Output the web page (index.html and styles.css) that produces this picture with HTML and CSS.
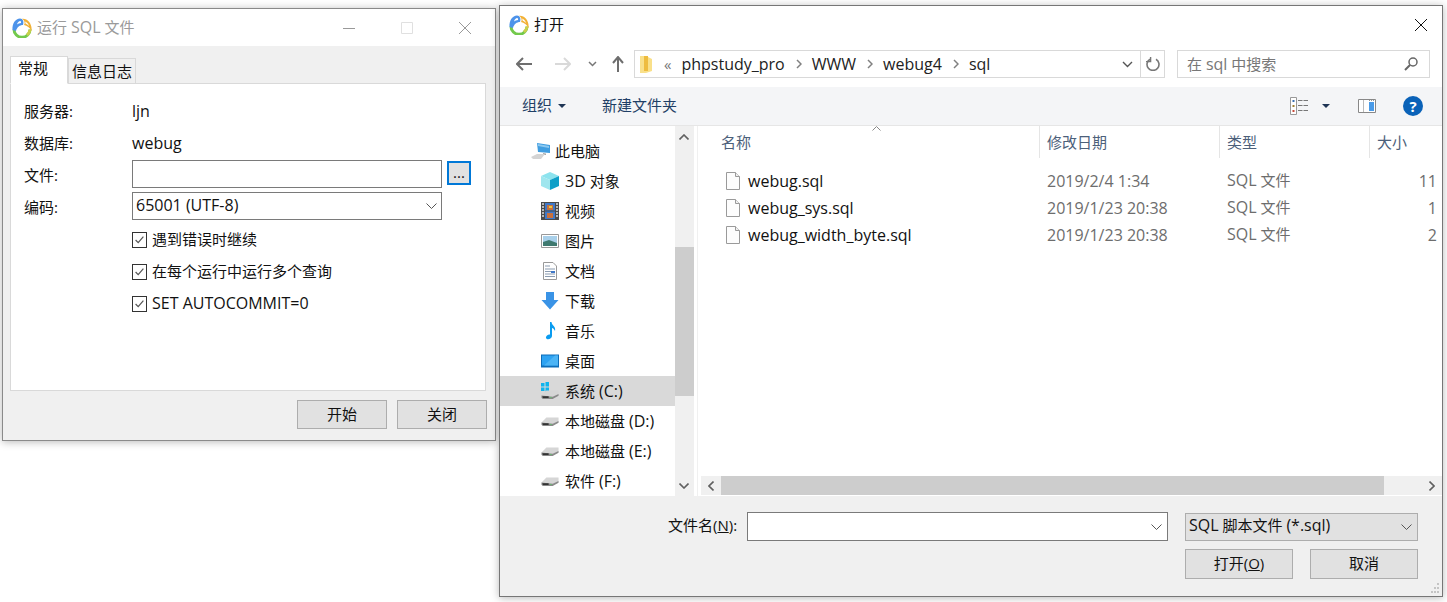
FILE: index.html
```html
<!DOCTYPE html>
<html lang="zh-CN">
<head>
<meta charset="utf-8">
<title>运行 SQL 文件</title>
<link rel="stylesheet" href="styles.css">
</head>
<body>
<svg class="defs" width="0" height="0">
  <defs>
    <symbol id="logo" viewBox="0 0 20 20">
      <path d="M2 11.500A8 7.800 0 0 0 18 11.500" fill="none" stroke="#73c94c" stroke-width="3"/>
      <path d="M15 17A8 7.800 0 0 0 18 11.500" fill="none" stroke="#c9cf4a" stroke-width="3"/>
      <path d="M.5 12C0 5.500 3.500 .5 8 .5C11 .5 12 3.500 11 7C8 7 5 9 4 13Z" fill="#4d93ea"/>
      <path d="M5 6.500C5.500 4.500 7 3 8.200 3C9 3 9.300 4 9 5C7.500 5.200 6 5.700 5 6.500Z" fill="#fff"/>
      <path d="M10 .8C15.500 0 20.500 6 19.500 13C18 9.500 15 7.500 12 7C13.500 4.500 12 2 10 .8Z" fill="#f2b136"/>
      <path d="M13 3.500C15 4 16.500 6 17 8C15.800 6.800 14.600 6 13.500 5.600C13.600 4.900 13.400 4.200 13 3.500Z" fill="#fff"/>
    </symbol>
    <symbol id="file" viewBox="0 0 14 18">
      <path d="M.5.5H9.500L13.500 4.500V17.500H.5Z" fill="#fdfdfd" stroke="#9a9a9a"/>
      <path d="M9.500.5V4.500H13.500" fill="#f0f0f0" stroke="#9a9a9a"/>
    </symbol>
    <symbol id="drive" viewBox="0 0 20 12">
      <path d="M.5 7L6 1.500H19.500V6L13 9H3Z" fill="#d6d6d6"/>
      <path d="M.5 7L13 8.500L19.500 5.500V7.500L13 11H2L.5 9.500Z" fill="#8a8a8a"/>
      <path d="M1.500 8H8.500V10H2Z" fill="#333"/>
      <path d="M10 9H12V10H10Z" fill="#5fc46a"/>
    </symbol>
    <symbol id="chev" viewBox="0 0 11 6">
      <path d="M.5.5L5.500 5.500L10.500.5" fill="none" stroke="currentColor"/>
    </symbol>
    <symbol id="check" viewBox="0 0 15 15">
      <path d="M3 7.500L6 10.500L12 3.500" fill="none" stroke="#555" stroke-width="1.400"/>
    </symbol>
    <symbol id="sep" viewBox="0 0 6 10">
      <path d="M1 1L5 5L1 9" fill="none" stroke="#808080" stroke-width="1.500"/>
    </symbol>
  </defs>
</svg>

<section class="win win-run">
  <header class="run-title">
    <svg class="logo"><use href="#logo"/></svg>
    <span class="run-title-text">运行 <span class="l">SQL</span> 文件</span>
    <div class="caption">
      <svg class="cap-icon" viewBox="0 0 12 12"><path d="M0 6.500H12" stroke="#999" fill="none"/></svg>
      <svg class="cap-icon" viewBox="0 0 12 12"><path d="M.5.5H11.500V11.500H.5Z" stroke="#e0e0e0" fill="none"/></svg>
      <svg class="cap-icon" viewBox="0 0 12 12"><path d="M0 0L12 12M12 0L0 12" stroke="#999" fill="none"/></svg>
    </div>
  </header>
  <div class="run-body">
    <div class="tabs">
      <div class="tab tab-active">常规</div>
      <div class="tab">信息日志</div>
    </div>
    <div class="panel">
      <div class="form">
        <span class="form-label">服务器:</span><span class="form-value l">ljn</span>
        <span class="form-label">数据库:</span><span class="form-value l">webug</span>
        <span class="form-label">文件:</span>
        <div class="file-row"><div class="input"></div><div class="dots">...</div></div>
        <span class="form-label">编码:</span>
        <div class="input select"><span class="form-value l">65001 (UTF-8)</span><svg class="chev"><use href="#chev"/></svg></div>
        <label class="check-row"><span class="box"><svg class="check"><use href="#check"/></svg></span><span class="check-text">遇到错误时继续</span></label>
        <label class="check-row"><span class="box"><svg class="check"><use href="#check"/></svg></span><span class="check-text">在每个运行中运行多个查询</span></label>
        <label class="check-row"><span class="box"><svg class="check"><use href="#check"/></svg></span><span class="check-text l">SET AUTOCOMMIT=0</span></label>
      </div>
    </div>
    <div class="run-actions">
      <div class="btn btn-run">开始</div>
      <div class="btn btn-run">关闭</div>
    </div>
  </div>
</section>

<section class="win win-open">
  <header class="open-title">
    <svg class="logo"><use href="#logo"/></svg>
    <span class="open-title-text">打开</span>
    <svg class="open-close" viewBox="0 0 12 12"><path d="M0 0L12 12M12 0L0 12" stroke="#111" fill="none"/></svg>
  </header>
  <div class="navbar">
    <svg class="nav-btn nav-back" viewBox="0 0 16 14"><path d="M7 1L1 7L7 13M1 7H16" fill="none" stroke="#6e6e6e" stroke-width="2"/></svg>
    <svg class="nav-btn nav-fwd" viewBox="0 0 16 14"><path d="M9 1L15 7L9 13M15 7H0" fill="none" stroke="#d9d9d9" stroke-width="2"/></svg>
    <svg class="nav-drop" viewBox="0 0 9 6"><path d="M1 1L4.500 4.500L8 1" fill="none" stroke="#777" stroke-width="1.500"/></svg>
    <svg class="nav-up" viewBox="0 0 12 16"><path d="M1 7L6 1L11 7M6 1V16" fill="none" stroke="#6e6e6e" stroke-width="2"/></svg>
    <div class="address">
      <svg class="addr-folder" viewBox="0 0 12 17"><path d="M0 0H6L12 3V15L6 17H0Z" fill="#f9e08a"/><path d="M8 0H4V15H8Z" fill="#eebc3f"/></svg>
      <span class="crumb-more">«</span>
      <span class="crumb l">phpstudy_pro</span><svg class="crumb-sep"><use href="#sep"/></svg>
      <span class="crumb l">WWW</span><svg class="crumb-sep"><use href="#sep"/></svg>
      <span class="crumb l">webug4</span><svg class="crumb-sep"><use href="#sep"/></svg>
      <span class="crumb l">sql</span>
      <svg class="addr-chev" viewBox="0 0 11 7"><path d="M1 1L5.500 5.500L10 1" fill="none" stroke="#555" stroke-width="1.400"/></svg>
      <div class="addr-refresh"><svg class="refresh" viewBox="0 0 14 14"><path d="M4 2.200A6 6 0 1 0 10 2.200" fill="none" stroke="#777" stroke-width="1.600"/><path d="M4.600 0V4.600H0" fill="none" stroke="#777" stroke-width="1.400"/></svg></div>
    </div>
    <div class="search">
      <span class="search-text">在 <span class="l">sql</span> 中搜索</span>
      <svg class="search-icon" viewBox="0 0 14 14"><circle cx="9" cy="5" r="4" fill="none" stroke="#666" stroke-width="1.500"/><path d="M6 8L1 13" stroke="#666" stroke-width="2"/></svg>
    </div>
  </div>
  <div class="toolbar">
    <span class="tool-org">组织</span><span class="caret"></span>
    <span class="tool-new">新建文件夹</span>
    <svg class="view-icon" viewBox="0 0 18 18"><path d="M.5.5H6.500V17.500H.5Z" fill="#fff" stroke="#999"/><path d="M2.500 3H4.500V5H2.500Z" fill="#3a6fb0"/><path d="M2.500 8H4.500V10H2.500Z" fill="#a08030"/><path d="M2.500 13H4.500V15H2.500Z" fill="#c84a3a"/><path d="M8 3.500H18M8 8.500H18M8 13.500H18" stroke="#777" stroke-dasharray="4.500 1"/></svg>
    <span class="caret caret-view"></span>
    <svg class="pane-icon" viewBox="0 0 18 14"><path d="M.5.5H17.500V13.500H.5Z" fill="#fff" stroke="#888"/><path d="M11 3H16V12H11Z" fill="#4a9be8"/><path d="M5.500 1V13" stroke="#bbb"/><path d="M11 1.500H17" stroke="#999" stroke-dasharray="1 1"/></svg>
    <div class="help">?</div>
  </div>
  <div class="main">
    <nav class="tree">
      <div class="tree-row tree-root"><svg class="ti" viewBox="0 0 20 18"><path d="M6 1L19 3V11L7 10Z" fill="#3f9de0"/><path d="M7 2L18 4V6L7 4Z" fill="#8cc9f0"/><path d="M12 11L15 11.500V13H12Z" fill="#aaa"/><path d="M0 15L6 12H14L10 17H2Z" fill="#d4d4d4"/></svg><span>此电脑</span></div>
      <div class="tree-row"><svg class="ti" viewBox="0 0 18 18"><path d="M9 0L18 4L9 8L0 4Z" fill="#8de3ee"/><path d="M0 4L9 8V18L0 14Z" fill="#9fe6ee"/><path d="M18 4L9 8V18L18 14Z" fill="#0e9fc8"/></svg><span><span class="l">3D</span> 对象</span></div>
      <div class="tree-row"><svg class="ti" viewBox="0 0 18 18"><path d="M0 0H18V18H0Z" fill="#4a4a4a"/><path d="M4 1H14V8.500H4Z" fill="#3f78c8"/><path d="M4 9.500H14V17H4Z" fill="#3f78c8"/><path d="M6 3H12V8H6ZM6 11H12V16H6Z" fill="#c8703c"/><path d="M8 4H11V6H8Z" fill="#e8c93a"/><path d="M1 2H3M1 5H3M1 8H3M1 11H3M1 14H3M15 2H17M15 5H17M15 8H17M15 11H17M15 14H17" stroke="#ddd" stroke-width="1.400"/></svg><span>视频</span></div>
      <div class="tree-row"><svg class="ti" viewBox="0 0 18 14"><path d="M.5.5H17.500V13.500H.5Z" fill="#fff" stroke="#999"/><path d="M2 2H16V12H2Z" fill="#a9d0ea"/><path d="M2 8L8 6L16 9V12H2Z" fill="#3f7a70"/></svg><span>图片</span></div>
      <div class="tree-row"><svg class="ti" viewBox="0 0 18 18"><path d="M2.500.5H12L15.500 4V17.500H2.500Z" fill="#fff" stroke="#999"/><path d="M4 4H9M4 7H14M4 9.500H14M4 12H14M4 14.500H14" stroke="#8a9bb0"/><path d="M10 9H14V11H10Z" fill="#3f78c8"/></svg><span>文档</span></div>
      <div class="tree-row"><svg class="ti" viewBox="0 0 18 18"><path d="M5 0H13V8H17.500L9 17.500L.5 8H5Z" fill="#3a93e6"/></svg><span>下载</span></div>
      <div class="tree-row"><svg class="ti" viewBox="0 0 18 18"><path d="M9 0H10.500C11 4 15 4 14 9C13 7 12 6 11 6V14C11 17 6 18.500 5 16C4.500 14 7 12 9 12.500Z" fill="#0a9cf0"/></svg><span>音乐</span></div>
      <div class="tree-row"><svg class="ti" viewBox="0 0 18 13"><path d="M0 0H18V13H0Z" fill="#0d6db8"/><path d="M1 1H17V11H1Z" fill="#2ea3f2"/><path d="M3 11L14 1H17V11Z" fill="#4cb4f5"/></svg><span>桌面</span></div>
      <div class="tree-row tree-selected"><svg class="ti" viewBox="0 0 18 18"><path d="M0 1H3.500V4.500H0ZM4.500 0H8V4.500H4.500ZM0 5.500H3.500V9H0ZM4.500 5.500H8V9.500H4.500Z" fill="#0fb4ee"/><use href="#drive" x="0" y="7" width="18" height="11"/></svg><span>系统 <span class="l">(C:)</span></span></div>
      <div class="tree-row"><svg class="ti"><use href="#drive" y="4" width="18" height="11"/></svg><span>本地磁盘 <span class="l">(D:)</span></span></div>
      <div class="tree-row"><svg class="ti"><use href="#drive" y="4" width="18" height="11"/></svg><span>本地磁盘 <span class="l">(E:)</span></span></div>
      <div class="tree-row"><svg class="ti"><use href="#drive" y="4" width="18" height="11"/></svg><span>软件 <span class="l">(F:)</span></span></div>
    </nav>
    <div class="vscroll">
      <svg class="sb-up" viewBox="0 0 10 6"><path d="M.5 5.500L5 1L9.500 5.500" fill="none" stroke="#606060" stroke-width="1.600"/></svg>
      <div class="vthumb"></div>
      <svg class="sb-down" viewBox="0 0 10 6"><path d="M.5.5L5 5L9.500.5" fill="none" stroke="#606060" stroke-width="1.600"/></svg>
    </div>
    <div class="content">
      <div class="list-head">
        <svg class="sort" viewBox="0 0 9 5"><path d="M.5 4.500L4.500.5L8.500 4.500" fill="none" stroke="#888"/></svg>
        <div class="hcell hcell-name">名称</div>
        <div class="hcell">修改日期</div>
        <div class="hcell">类型</div>
        <div class="hcell hcell-last">大小</div>
      </div>
      <div class="list">
        <div class="row"><div class="name"><svg class="file-ic"><use href="#file"/></svg><span class="l">webug.sql</span></div><div class="meta l">2019/2/4 1:34</div><div class="meta meta-type"><span class="l">SQL</span> 文件</div><div class="meta size l">11</div></div>
        <div class="row"><div class="name"><svg class="file-ic"><use href="#file"/></svg><span class="l">webug_sys.sql</span></div><div class="meta l">2019/1/23 20:38</div><div class="meta meta-type"><span class="l">SQL</span> 文件</div><div class="meta size l">1</div></div>
        <div class="row"><div class="name"><svg class="file-ic"><use href="#file"/></svg><span class="l">webug_width_byte.sql</span></div><div class="meta l">2019/1/23 20:38</div><div class="meta meta-type"><span class="l">SQL</span> 文件</div><div class="meta size l">2</div></div>
      </div>
      <div class="hscroll">
        <svg class="sb-left" viewBox="0 0 6 10"><path d="M5.500.5L1 5L5.500 9.500" fill="none" stroke="#606060" stroke-width="1.600"/></svg>
        <div class="hthumb"></div>
        <svg class="sb-right" viewBox="0 0 6 10"><path d="M.5.5L5 5L.5 9.500" fill="none" stroke="#606060" stroke-width="1.600"/></svg>
      </div>
    </div>
  </div>
  <div class="open-foot">
    <div class="foot-row">
      <span class="foot-label">文件名(<u>N</u>):</span>
      <div class="input foot-input"><svg class="chev"><use href="#chev"/></svg></div>
      <div class="foot-select"><span class="foot-select-text"><span class="l">SQL</span> 脚本文件 <span class="l">(*.sql)</span></span><svg class="chev"><use href="#chev"/></svg></div>
    </div>
    <div class="foot-actions">
      <div class="btn btn-open"><span>打开(<u>O</u>)</span></div>
      <div class="btn btn-open">取消</div>
    </div>
    <svg class="grip" viewBox="0 0 10 12"><path d="M7 1H9V3H7ZM4 5H6V7H4ZM7 5H9V7H7ZM1 9H3V11H1ZM4 9H6V11H4ZM7 9H9V11H7Z" fill="#c4c4c4"/></svg>
  </div>
</section>
</body>
</html>
```

FILE: styles.css
```css
* { box-sizing: border-box; }
html, body { margin: 0; height: 100%; }
body {
  position: relative;
  width: 1447px;
  height: 602px;
  overflow: hidden;
  background: #fff;
  color: #111;
  font: 15px/20px "Open Sans", "Noto Sans CJK SC", sans-serif;
}
.defs { position: absolute; }
svg { display: block; flex: none; }
.l { font-size: 16px; }

.win {
  position: absolute;
  display: flex;
  flex-direction: column;
  background: #f0f0f0;
  border: 1px solid #8a8a8a;
  box-shadow: 0 1px 8px rgba(0, 0, 0, .28);
}
.win-run { left: 2px; top: 8px; width: 494px; height: 433px; }
.win-open { left: 499px; top: 5px; width: 944px; height: 592px; border-color: #767676; }

.logo { width: 20px; height: 20px; }

/* left window */
.run-title {
  display: flex;
  align-items: center;
  height: 37px;
  padding-left: 9px;
  background: #fff;
}
.run-title-text { margin-left: 5px; padding-bottom: 2px; color: #9a9a9a; }
.caption { display: flex; gap: 46px; margin-left: auto; margin-right: 24px; }
.cap-icon { width: 12px; height: 12px; }
.run-body { flex: 1; padding: 10px 8px 0 7px; }
.tabs { display: flex; align-items: flex-end; height: 28px; margin-bottom: -1px; }
.tab {
  position: relative;
  height: 26px;
  padding: 2px 3px 0;
  border: 1px solid #d9d9d9;
  background: #f0f0f0;
}
.tab-active {
  z-index: 1;
  width: 58px;
  height: 28px;
  padding: 1px 7px 0;
  background: #fff;
  border-bottom-color: #fff;
}
.panel {
  height: 308px;
  width: 476px;
  padding-top: 12px;
  border: 1px solid #d9d9d9;
  background: #fff;
}
.form {
  display: grid;
  grid-template-columns: 108px 1fr;
  grid-auto-rows: 32px;
  align-items: center;
  padding-left: 13px;
}
.form-label { grid-column: 1; padding-bottom: 2px; }
.form-value { padding-bottom: 2px; }
.file-row { display: flex; align-items: flex-start; gap: 5px; align-self: start; }
.input {
  display: flex;
  align-items: center;
  width: 310px;
  height: 28px;
  padding: 0 3px;
  background: #fff;
  border: 1px solid #7a7a7a;
}
.select { justify-content: space-between; align-self: start; padding-right: 4px; }
.chev { width: 11px; height: 6px; color: #555; }
.dots {
  display: flex;
  justify-content: center;
  align-items: center;
  width: 24px;
  height: 24px;
  margin-top: 1px;
  padding-bottom: 2px;
  background: #e1e1e1;
  border: 2px solid #0078d7;
  line-height: 1;
}
.check-row { grid-column: 2; display: flex; align-items: center; gap: 5px; }
.check-text { padding-bottom: 2px; }
.box {
  width: 15px;
  height: 16px;
  background: #fff;
  border: 1px solid #333;
}
.check { width: 13px; height: 14px; }
.run-actions { display: flex; justify-content: flex-end; gap: 10px; margin-top: 9px; }
.btn {
  display: flex;
  justify-content: center;
  align-items: center;
  padding-bottom: 2px;
  background: #e1e1e1;
  border: 1px solid #adadad;
}
.btn-run { width: 90px; height: 29px; }

/* right window */
.open-title {
  display: flex;
  align-items: center;
  height: 37px;
  padding: 0 15px 0 9px;
  background: #fff;
}
.open-title-text { margin-left: 5px; padding-bottom: 2px; }
.open-close { width: 12px; height: 12px; margin-left: auto; }
.navbar {
  display: flex;
  align-items: center;
  height: 44px;
  padding: 0 0 2px 16px;
  background: #fff;
}
.nav-btn { width: 16px; height: 14px; }
.nav-fwd { margin-left: 23px; }
.nav-drop { width: 9px; height: 6px; margin-left: 17px; }
.nav-up { width: 12px; height: 16px; margin-left: 15px; }
.address {
  display: flex;
  align-items: center;
  width: 531px;
  height: 28px;
  margin-left: 10px;
  padding-left: 5px;
  border: 1px solid #d9d9d9;
  color: #222;
}
.addr-folder { width: 12px; height: 17px; margin-right: 12px; }
.crumb { padding-bottom: 1px; }
.crumb-more { margin-right: 10px; padding-bottom: 1px; color: #777; }
.crumb-sep { width: 6px; height: 10px; margin: 0 10px 0 11px; }
.addr-chev { width: 11px; height: 7px; margin-left: auto; margin-right: 7px; }
.addr-refresh {
  display: flex;
  justify-content: center;
  align-items: center;
  width: 24px;
  height: 100%;
  border-left: 1px solid #d9d9d9;
}
.refresh { width: 14px; height: 14px; }
.search {
  display: flex;
  align-items: center;
  justify-content: space-between;
  width: 253px;
  height: 28px;
  margin-left: 12px;
  padding: 0 11px 0 9px;
  border: 1px solid #d9d9d9;
  color: #777;
}
.search-text { padding-bottom: 1px; }
.search-icon { width: 14px; height: 14px; }
.toolbar {
  display: flex;
  align-items: center;
  height: 39px;
  padding-left: 22px;
  background: #f4f5f7;
  border-bottom: 1px solid #e6e6e6;
  color: #1f3f66;
}
.tool-org, .tool-new { padding-bottom: 2px; }
.caret {
  width: 0;
  height: 0;
  margin-left: 6px;
  border: 4px solid transparent;
  border-top: 4px solid #1f3555;
  border-bottom: 0;
}
.tool-new { margin-left: 36px; }
.view-icon { width: 18px; height: 18px; margin-left: auto; }
.caret-view { margin-left: 14px; }
.pane-icon { width: 18px; height: 14px; margin-left: 28px; }
.help {
  display: flex;
  justify-content: center;
  align-items: center;
  width: 20px;
  height: 20px;
  margin: 0 19px 0 27px;
  border-radius: 50%;
  background: #0a62b8;
  color: #fff;
  font-weight: 700;
}
.main { display: flex; height: 370px; background: #fff; }
.tree { width: 175px; padding-top: 10px; overflow: hidden; background: #fff; }
.tree-row {
  display: flex;
  align-items: center;
  gap: 6px;
  height: 30px;
  padding-left: 41px;
  white-space: nowrap;
}
.tree-root { padding-left: 31px; gap: 4px; }
.tree-selected { background: #d9d9d9; }
.ti { width: 18px; height: 18px; }
.tree-root .ti { width: 20px; }
.vscroll { position: relative; width: 19px; background: #f0f0f0; flex: none; }
.vthumb { position: absolute; top: 121px; left: 0; width: 100%; height: 149px; background: #cdcdcd; }
.sb-up, .sb-down { position: absolute; left: 4px; width: 10px; height: 6px; }
.sb-up { top: 8px; }
.sb-down { top: 357px; }
.content {
  display: flex;
  flex-direction: column;
  flex: 1;
  min-width: 0;
  margin-left: 3px;
  border-left: 1px solid #f0f0f0;
}
.list-head {
  position: relative;
  display: grid;
  grid-template-columns: 342px 180px 150px 1fr;
  height: 32px;
  color: #4c607a;
}
.sort { position: absolute; left: 174px; top: 0; width: 9px; height: 5px; }
.hcell { padding: 6px 0 0 7px; border-right: 1px solid #e5e5e5; }
.hcell-name { padding-left: 23px; }
.hcell-last { border-right: 0; }
.list { flex: 1; padding-top: 9px; }
.row {
  display: grid;
  grid-template-columns: 342px 180px 150px 1fr;
  align-items: center;
  height: 27px;
}
.name { display: flex; align-items: center; gap: 8px; padding-left: 28px; color: #111; }
.file-ic { width: 14px; height: 18px; }
.meta { padding-left: 7px; color: #6d6d6d; }
.meta-type { padding-bottom: 2px; }
.size { padding-right: 5px; text-align: right; }
.hscroll {
  position: relative;
  flex: none;
  height: 19px;
  margin: 0 0 1px 3px;
  background: #f0f0f0;
}
.hthumb { position: absolute; left: 20px; top: 0; width: 663px; height: 100%; background: #cdcdcd; }
.sb-left, .sb-right { position: absolute; top: 5px; width: 6px; height: 10px; }
.sb-left { left: 7px; }
.sb-right { right: 7px; }
.open-foot { position: relative; flex: 1; padding-top: 16px; background: #f0f0f0; }
.foot-row { display: flex; align-items: center; height: 29px; padding-left: 168px; }
.foot-label { width: 79px; padding-bottom: 3px; }
.foot-input { justify-content: flex-end; width: 421px; height: 29px; padding-right: 5px; }
.foot-select {
  display: flex;
  align-items: center;
  justify-content: space-between;
  width: 233px;
  height: 28px;
  margin-left: 17px;
  padding: 0 5px 0 3px;
  background: #e1e1e1;
  border: 1px solid #adadad;
}
.foot-select-text { padding-bottom: 3px; }
.foot-actions { display: flex; justify-content: flex-end; gap: 17px; margin-top: 8px; padding-right: 24px; }
.btn-open { width: 108px; height: 30px; }
.grip { position: absolute; right: 2px; bottom: 2px; width: 10px; height: 12px; }
```
